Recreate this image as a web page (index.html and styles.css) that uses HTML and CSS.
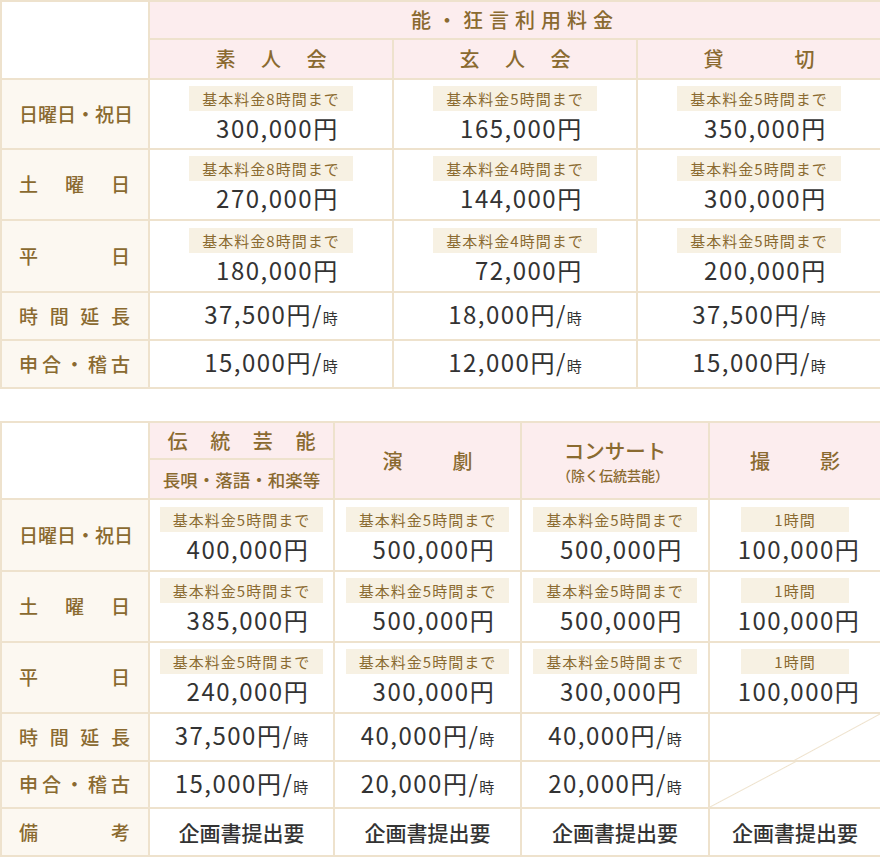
FILE: index.html
```html
<!DOCTYPE html>
<html lang="ja">
<head>
<meta charset="utf-8">
<title>利用料金</title>
<link rel="stylesheet" href="styles.css">
</head>
<body>
<table class="fee fee-noh">
  <colgroup><col class="c-label"><col class="c-a"><col class="c-a"><col class="c-a"></colgroup>
  <tr class="r-h1">
    <td class="blank" rowspan="2"></td>
    <th class="title" colspan="3">能・狂言利用料金</th>
  </tr>
  <tr class="r-h2">
    <th><span class="jt w111">素人会</span></th>
    <th><span class="jt w111">玄人会</span></th>
    <th><span class="jt w111">貸切</span></th>
  </tr>
  <tr class="r-price">
    <th class="label"><span class="jt">日曜日・祝日</span></th>
    <td><div class="price"><span class="badge">基本料金8時間まで</span><span class="val">300,000円</span></div></td>
    <td><div class="price"><span class="badge">基本料金5時間まで</span><span class="val">165,000円</span></div></td>
    <td><div class="price"><span class="badge">基本料金5時間まで</span><span class="val">350,000円</span></div></td>
  </tr>
  <tr class="r-price r-mid">
    <th class="label"><span class="jt">土曜日</span></th>
    <td><div class="price"><span class="badge">基本料金8時間まで</span><span class="val">270,000円</span></div></td>
    <td><div class="price"><span class="badge">基本料金4時間まで</span><span class="val">144,000円</span></div></td>
    <td><div class="price"><span class="badge">基本料金5時間まで</span><span class="val">300,000円</span></div></td>
  </tr>
  <tr class="r-price r-last">
    <th class="label"><span class="jt">平日</span></th>
    <td><div class="price"><span class="badge">基本料金8時間まで</span><span class="val">180,000円</span></div></td>
    <td><div class="price"><span class="badge">基本料金4時間まで</span><span class="val">72,000円</span></div></td>
    <td><div class="price"><span class="badge">基本料金5時間まで</span><span class="val">200,000円</span></div></td>
  </tr>
  <tr class="r-rate">
    <th class="label"><span class="jt">時間延長</span></th>
    <td><span class="val">37,500円/<small>時</small></span></td>
    <td><span class="val">18,000円/<small>時</small></span></td>
    <td><span class="val">37,500円/<small>時</small></span></td>
  </tr>
  <tr class="r-rate">
    <th class="label"><span class="jt">申合・稽古</span></th>
    <td><span class="val">15,000円/<small>時</small></span></td>
    <td><span class="val">12,000円/<small>時</small></span></td>
    <td><span class="val">15,000円/<small>時</small></span></td>
  </tr>
</table>

<table class="fee fee-other">
  <colgroup><col class="c-label"><col class="c-b1"><col class="c-b2"><col class="c-b3"><col class="c-b4"></colgroup>
  <tr class="r-h1b">
    <td class="blank" rowspan="2"></td>
    <th class="sub-top"><span class="jt w148">伝統芸能</span></th>
    <th rowspan="2"><span class="jt w90">演劇</span></th>
    <th rowspan="2" class="concert"><span class="c-main">コンサート</span><span class="c-note">（除く伝統芸能）</span></th>
    <th rowspan="2"><span class="jt w90">撮影</span></th>
  </tr>
  <tr class="r-h2b">
    <th class="sub-bottom">長唄・落語・和楽等</th>
  </tr>
  <tr class="r-price2">
    <th class="label"><span class="jt">日曜日・祝日</span></th>
    <td><div class="price"><span class="badge">基本料金5時間まで</span><span class="val">400,000円</span></div></td>
    <td><div class="price"><span class="badge">基本料金5時間まで</span><span class="val">500,000円</span></div></td>
    <td><div class="price"><span class="badge">基本料金5時間まで</span><span class="val">500,000円</span></div></td>
    <td><span class="badge badge-hour">1時間</span><span class="val val-block">100,000円</span></td>
  </tr>
  <tr class="r-price2 r-mid2">
    <th class="label"><span class="jt">土曜日</span></th>
    <td><div class="price"><span class="badge">基本料金5時間まで</span><span class="val">385,000円</span></div></td>
    <td><div class="price"><span class="badge">基本料金5時間まで</span><span class="val">500,000円</span></div></td>
    <td><div class="price"><span class="badge">基本料金5時間まで</span><span class="val">500,000円</span></div></td>
    <td><span class="badge badge-hour">1時間</span><span class="val val-block">100,000円</span></td>
  </tr>
  <tr class="r-price2 r-mid2">
    <th class="label"><span class="jt">平日</span></th>
    <td><div class="price"><span class="badge">基本料金5時間まで</span><span class="val">240,000円</span></div></td>
    <td><div class="price"><span class="badge">基本料金5時間まで</span><span class="val">300,000円</span></div></td>
    <td><div class="price"><span class="badge">基本料金5時間まで</span><span class="val">300,000円</span></div></td>
    <td><span class="badge badge-hour">1時間</span><span class="val val-block">100,000円</span></td>
  </tr>
  <tr class="r-rate">
    <th class="label"><span class="jt">時間延長</span></th>
    <td><span class="val">37,500円/<small>時</small></span></td>
    <td><span class="val">40,000円/<small>時</small></span></td>
    <td><span class="val">40,000円/<small>時</small></span></td>
    <td class="diag diag-top"></td>
  </tr>
  <tr class="r-rate2">
    <th class="label"><span class="jt">申合・稽古</span></th>
    <td><span class="val">15,000円/<small>時</small></span></td>
    <td><span class="val">20,000円/<small>時</small></span></td>
    <td><span class="val">20,000円/<small>時</small></span></td>
    <td class="diag diag-bottom"></td>
  </tr>
  <tr class="r-rate">
    <th class="label"><span class="jt">備考</span></th>
    <td class="note">企画書提出要</td>
    <td class="note">企画書提出要</td>
    <td class="note">企画書提出要</td>
    <td class="note">企画書提出要</td>
  </tr>
</table>
</body>
</html>
```

FILE: styles.css
```css
html, body {
  margin: 0;
  padding: 0;
  background: #ffffff;
}

body {
  font-family: "Noto Sans CJK JP", "Noto Sans", sans-serif;
  color: #333333;
  width: 880px;
}

.fee {
  width: 880px;
  border-collapse: collapse;
  table-layout: fixed;
  border: 2px solid #eee2cd;
}

.fee-other {
  margin-top: 32px;
}

.fee th,
.fee td {
  border: 2px solid #eee2cd;
  padding: 0;
  text-align: center;
  vertical-align: middle;
}

.c-label { width: 148px; }
.c-a { width: 244px; }
.c-b1 { width: 185px; }
.c-b2 { width: 187px; }
.c-b3 { width: 188px; }
.c-b4 { width: 172px; }

.blank { background: #ffffff; }

.fee tr > th {
  background: #fcedee;
  color: #8a6a30;
  font-weight: 500;
  font-size: 20px;
  line-height: 1.2;
}

.fee th.label {
  background: #fcf8f1;
  font-size: 19px;
  padding: 0 18px 0 17px;
}

.jt {
  display: block;
  text-align: justify;
  text-align-last: justify;
  white-space: nowrap;
}

.w111 { display: inline-block; width: 111px; }
.w148 { display: inline-block; width: 148px; }
.w90 { display: inline-block; width: 90px; }

.title {
  letter-spacing: 6px;
  padding-left: 18px;
}

.r-h1 { height: 38px; }
.r-h2 { height: 40px; }
.r-price { height: 70px; }
.r-mid { height: 71px; }
.r-last { height: 72px; }
.r-rate { height: 48px; }
.r-rate2 { height: 47px; }

.r-h1b { height: 37px; }
.r-h2b { height: 40px; }
.r-price2 { height: 72px; }
.r-mid2 { height: 71px; }

.fee th.sub-bottom {
  font-size: 17.5px;
}

.concert .c-main {
  display: block;
  font-size: 20.5px;
  line-height: 30px;
}

.concert .c-note {
  display: block;
  font-size: 14px;
  line-height: 21px;
  margin-left: -4px;
}

.price {
  display: inline-block;
  vertical-align: middle;
}

.badge {
  display: block;
  background: #f7f1e3;
  color: #8a6a30;
  font-size: 15px;
  line-height: 25px;
  padding: 0 13px;
  letter-spacing: 1px;
  white-space: nowrap;
}

.price .val {
  display: block;
  text-align: right;
  padding-right: 14px;
  margin-top: 2px;
}

.val {
  font-size: 24px;
  line-height: 30px;
  letter-spacing: 1.5px;
  color: #333333;
  white-space: nowrap;
}

.val small {
  font-size: 15px;
  letter-spacing: 0;
}

.badge-hour {
  display: inline-block;
  width: 82px;
  padding: 0 13px;
}

.val-block {
  display: block;
  margin-top: 2px;
  padding-left: 8px;
}

.note {
  font-size: 21px;
  font-weight: 500;
  color: #333333;
}

.diag {
  background-image: linear-gradient(to bottom right, transparent calc(50% - 1px), #eee2cd 50%, transparent calc(50% + 1px));
  background-size: 100% 200%;
  background-repeat: no-repeat;
}

.diag-top { background-position: 0 0; }
.diag-bottom { background-position: 0 100%; }
```
